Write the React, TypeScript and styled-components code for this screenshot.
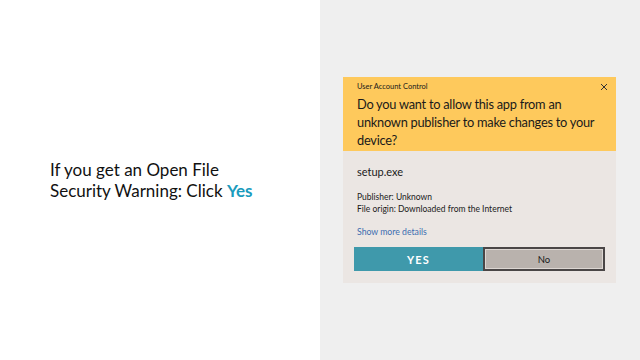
import React from 'react';
import styled, { createGlobalStyle } from 'styled-components';

const GlobalStyle = createGlobalStyle`
  html, body {
    margin: 0;
    padding: 0;
  }
  body {
    width: 640px;
    height: 360px;
    overflow: hidden;
  }
`;

const Slide = styled.div`
  display: grid;
  grid-template-columns: 320px 320px;
  width: 640px;
  height: 360px;
`;

const LeftPane = styled.div`
  background: #ffffff;
  display: flex;
  align-items: center;
  padding: 0 0 0 50px;
`;

const Caption = styled.p`
  margin: 0;
  font-family: Lato, 'Open Sans', sans-serif;
  font-size: 17px;
  line-height: 21px;
  color: #111111;
`;

const Accent = styled.span`
  color: #1a9bbd;
  font-weight: bold;
`;

const RightPane = styled.div`
  background: #efefef;
  padding: 77px 24px 0 23px;
`;

const Dialog = styled.div`
  background: #ebe6e3;
  font-family: Lato, 'Open Sans', sans-serif;
  color: #1a1a1a;
  height: 206px;
  display: flex;
  flex-direction: column;
`;

const Header = styled.div`
  background: #fec95c;
  height: 74px;
  padding: 2px 8px 0 14px;
  box-sizing: border-box;
`;

const TitleRow = styled.div`
  display: flex;
  justify-content: space-between;
  align-items: center;
  height: 15px;
  font-size: 7.5px;
`;

const Question = styled.div`
  font-size: 12.8px;
  letter-spacing: -0.25px;
  line-height: 18px;
  margin-top: 1px;
`;

const Body = styled.div`
  padding: 14px 11px 0 14px;
  display: flex;
  flex-direction: column;
`;

const FileName = styled.div`
  font-size: 11px;
  line-height: 14px;
`;

const Meta = styled.div`
  margin-top: 12px;
  font-size: 8.5px;
  line-height: 12px;
`;

const DetailsLink = styled.div`
  margin-top: 11px;
  font-size: 8.7px;
  line-height: 12px;
  color: #3c6db0;
`;

const Buttons = styled.div`
  display: grid;
  grid-template-columns: 129px 122px;
  margin: 9px 0 0 -3px;
  height: 24px;
`;

const Button = styled.div<{ $primary?: boolean }>`
  display: flex;
  align-items: center;
  justify-content: center;
  box-sizing: border-box;
  font-size: ${(p) => (p.$primary ? '11px' : '9.5px')};
  font-weight: ${(p) => (p.$primary ? 700 : 400)};
  letter-spacing: ${(p) => (p.$primary ? '1.2px' : '0')};
  background: ${(p) => (p.$primary ? '#3f99ab' : '#b9b2ad')};
  color: ${(p) => (p.$primary ? '#ffffff' : '#1a1a1a')};
  border: ${(p) => (p.$primary ? 'none' : '2px solid #4a4646')};
  box-shadow: ${(p) => (p.$primary ? 'none' : 'inset 0 0 0 1px #dcd6d2')};
`;

const CloseIcon = () => (
  <svg width="8" height="8" viewBox="0 0 8 8">
    <path d="M1 1L7 7M7 1L1 7" stroke="#333" strokeWidth="1" />
  </svg>
);

const App: React.FC = () => {
  return (
    <>
      <GlobalStyle />
      <Slide>
        <LeftPane>
          <Caption>
            If you get an Open File
            <br />
            Security Warning: Click <Accent>Yes</Accent>
          </Caption>
        </LeftPane>
        <RightPane>
          <Dialog>
            <Header>
              <TitleRow>
                <span>User Account Control</span>
                <CloseIcon />
              </TitleRow>
              <Question>
                Do you want to allow this app from an unknown publisher to make
                changes to your device?
              </Question>
            </Header>
            <Body>
              <FileName>setup.exe</FileName>
              <Meta>
                Publisher: Unknown
                <br />
                File origin: Downloaded from the Internet
              </Meta>
              <DetailsLink>Show more details</DetailsLink>
              <Buttons>
                <Button $primary>YES</Button>
                <Button>No</Button>
              </Buttons>
            </Body>
          </Dialog>
        </RightPane>
      </Slide>
    </>
  );
};

export default App;
